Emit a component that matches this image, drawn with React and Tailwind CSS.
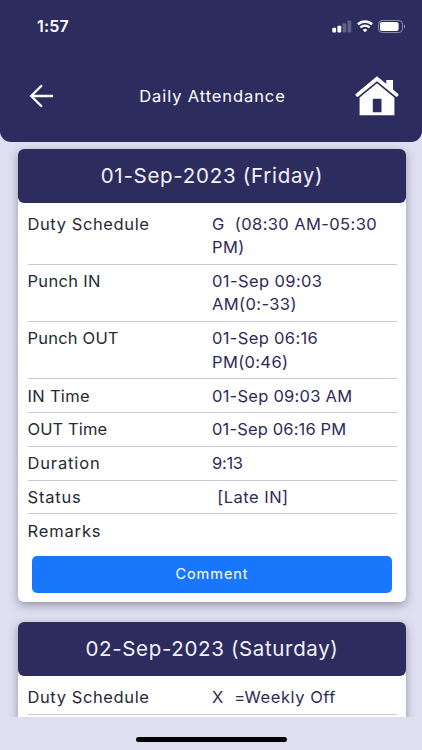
const days = [
  {
    title: '01-Sep-2023 (Friday)',
    titleClass: 'tracking-[0.72px]',
    rows: [
      { label: 'Duty Schedule', value: 'G  (08:30 AM-05:30 PM)', labelClass: 'tracking-[0.6px]', valueClass: 'tracking-[0.4px]' },
      { label: 'Punch IN', value: '01-Sep 09:03 AM(0:-33)', labelClass: 'tracking-[0.3px]', valueClass: 'tracking-[0.4px]' },
      { label: 'Punch OUT', value: '01-Sep 06:16 PM(0:46)', labelClass: 'tracking-[0.2px]', valueClass: 'tracking-[0.35px]' },
      { label: 'IN Time', value: '01-Sep 09:03 AM', labelClass: 'tracking-[0.3px]', valueClass: 'tracking-[0.25px]' },
      { label: 'OUT Time', value: '01-Sep 06:16 PM', labelClass: 'tracking-[0.1px]', valueClass: 'tracking-[0.15px]' },
      { label: 'Duration', value: '9:13', labelClass: 'tracking-[0.85px]', valueClass: 'tracking-[-0.3px]' },
      { label: 'Status', value: ' [Late IN]', labelClass: 'tracking-[0.8px]', valueClass: 'tracking-[0.5px]' },
      { label: 'Remarks', value: '', labelClass: 'tracking-[0.85px]', valueClass: '' },
    ],
  },
  {
    title: '02-Sep-2023 (Saturday)',
    titleClass: 'tracking-[0.65px]',
    rows: [{ label: 'Duty Schedule', value: 'X  =Weekly Off', labelClass: 'tracking-[0.6px]', valueClass: 'tracking-[0.55px]' }],
  },
];

const SignalIcon = () => (
  <svg width="20" height="13" viewBox="0 0 20 13" fill="#fff">
    <rect x="0.3" y="7.8" width="3.8" height="4.6" rx="1" />
    <rect x="5.4" y="5.8" width="3.8" height="6.6" rx="1" />
    <rect x="10.5" y="3.2" width="3.8" height="9.2" rx="1" opacity="0.25" />
    <rect x="15.5" y="0.6" width="3.8" height="11.8" rx="1" opacity="0.25" />
  </svg>
);

const WifiIcon = () => (
  <svg width="16" height="13" viewBox="0 0 16 13" fill="none" stroke="#fff" strokeWidth="2.3">
    <path d="M0.9 4.4a10.2 10.2 0 0 1 14.2 0" />
    <path d="M3.4 7.5a6.6 6.6 0 0 1 9.2 0" />
    <path d="M8 12.2 5.7 9.9a3.3 3.3 0 0 1 4.6 0Z" fill="#fff" stroke="none" />
  </svg>
);

const BatteryIcon = () => (
  <svg width="28" height="13" viewBox="0 0 28 13" fill="none">
    <rect x="0.5" y="0.5" width="24" height="12" rx="3.6" stroke="#fff" strokeOpacity="0.45" />
    <rect x="2" y="2" width="18.6" height="9" rx="2" fill="#fff" />
    <path d="M26 4.6v3.8c1.5-.6 1.5-3.2 0-3.8Z" fill="#fff" fillOpacity="0.5" />
  </svg>
);

const BackIcon = () => (
  <svg width="24" height="24" viewBox="0 0 24 24" fill="none" stroke="#fff" strokeWidth="2.3">
    <path d="M24 12H2M13 1.2 2.2 12 13 22.8" />
  </svg>
);

const HomeIcon = () => (
  <svg width="44" height="40" viewBox="0 0 44 40" fill="#fff">
    <path d="M31.2 4H38v13.5l-6.8-6Z" />
    <path fillRule="evenodd" d="M22 7.2 39.4 21.5v17.7H4.6V21.5ZM17.8 22.8v13.4h8.7V22.8Z" />
    <path d="M2.8 21.2 22 5.2l19.2 16" fill="none" stroke="#2d2c5f" strokeWidth="2.4" />
    <path d="M2.4 18.9 22 2.7l19.6 16.2" fill="none" stroke="#fff" strokeWidth="3.7" strokeLinecap="round" />
  </svg>
);

const Header = () => (
  <header className="h-[142px] shrink-0 rounded-b-[11px] bg-[#2d2c5f] text-white">
    <div className="flex h-[52px] items-center justify-between pl-[37px] pr-[16px]">
      <span className="text-[16px] font-semibold tracking-[0.2px]">1:57</span>
      <div className="flex items-center gap-[5px]">
        <SignalIcon />
        <WifiIcon />
        <BatteryIcon />
      </div>
    </div>
    <div className="flex h-[88px] items-center justify-between pl-[29px] pr-[23px]">
      <BackIcon />
      <h1 className="pl-[17px] text-[16.5px] tracking-[0.9px]">Daily Attendance</h1>
      <HomeIcon />
    </div>
  </header>
);

const DayCard = ({ day, action }) => (
  <section className="rounded-[6px] bg-white shadow-[0_3px_10px_rgba(40,40,70,0.42)]">
    <h2 className={`flex h-[54px] items-center justify-center rounded-[6px] bg-[#2d2c5f] pt-[2px] text-[20.5px] text-[#f1f0f8] ${day.titleClass}`}>
      {day.title}
    </h2>
    <dl className="px-[9.5px] pt-[5px] text-[16.5px] leading-[23.5px]">
      {day.rows.map((row) => (
        <div key={row.label} className={`grid grid-cols-2 border-[#c9c8d8] pt-[5.2px] pb-[4.1px] ${row.label === 'Remarks' ? '' : 'border-b'}`}>
          <dt className={`text-[#262a33] ${row.labelClass}`}>{row.label}</dt>
          <dd className={`whitespace-pre-wrap text-[#2f2a57] ${row.valueClass}`}>{row.value}</dd>
        </div>
      ))}
    </dl>
    {action ? (
      <div className="px-[14px] pt-[8.5px] pb-[9px]">
        <button className="block h-[37px] w-full rounded-[5px] bg-[#1877fd] text-[14.5px] tracking-[0.95px] text-white">{action}</button>
      </div>
    ) : (
      <div className="h-[37px]" />
    )}
  </section>
);

export default function App() {
  return (
    <div className="flex h-[750px] w-[422px] flex-col overflow-hidden bg-[#dfdff1] font-['Inter','Liberation_Sans',sans-serif]">
      <Header />
      <main className="flex h-[575px] shrink-0 flex-col gap-[20px] overflow-hidden pt-[6.5px] pr-[16px] pl-[18px]">
        <DayCard day={days[0]} action="Comment" />
        <DayCard day={days[1]} />
      </main>
      <div className="flex flex-1 items-center justify-center pt-[11px]">
        <div className="h-[5px] w-[151px] rounded-full bg-black" />
      </div>
    </div>
  );
}
